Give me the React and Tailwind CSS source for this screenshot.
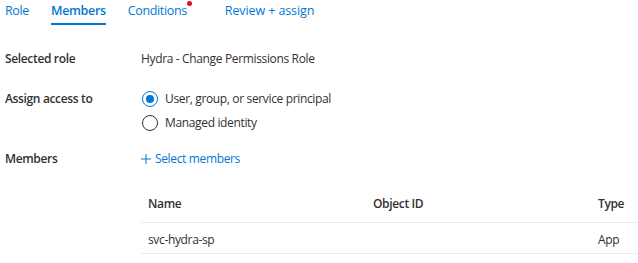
import React from "react";

export default function App() {
  return (
    <div className="w-[638px] h-[263px] bg-white overflow-hidden text-[12px] tracking-[-0.35px] text-[#323130] font-['Open_Sans','Noto_Sans',sans-serif]">
      {/* Tabs */}
      <div className="flex h-[26px] items-start pl-[5px] text-[12.5px]">
        <div className="h-[26px] pt-[2px] text-[#0078d4]">Role</div>
        <div className="relative ml-[22px] h-[26px] pt-[2px] font-semibold text-[#0078d4]">
          Members
          <div className="absolute left-0 right-0 top-[23px] h-[2px] bg-[#0078d4]" />
        </div>
        <div className="relative ml-[22px] h-[26px] pt-[2px] text-[#0078d4]">
          Conditions
          <span className="absolute right-[-5px] top-[1px] w-[5px] h-[5px] rounded-full bg-[#e00b1c]" />
        </div>
        <div className="ml-[38px] h-[26px] pt-[2px] tracking-[-0.1px] text-[#0078d4]">Review + assign</div>
      </div>

      {/* Selected role */}
      <div className="flex items-center h-[20px] mt-[23px] pl-[5px]">
        <div className="w-[136px] font-semibold">Selected role</div>
        <div>Hydra - Change Permissions Role</div>
      </div>

      {/* Assign access to */}
      <div className="flex pl-[5px] mt-[20px]">
        <div className="w-[136px] h-[20px] flex items-center font-semibold">Assign access to</div>
        <div className="flex flex-col gap-[4px]">
          <div className="flex items-center h-[20px]">
            <span className="w-[16px] h-[16px] ml-[1px] rounded-full border border-[#0078d4] flex items-center justify-center">
              <span className="w-[8px] h-[8px] rounded-full bg-[#0078d4]" />
            </span>
            <span className="ml-[7px]">User, group, or service principal</span>
          </div>
          <div className="flex items-center h-[20px]">
            <span className="w-[16px] h-[16px] ml-[1px] rounded-full border border-[#323130]" />
            <span className="ml-[7px]">Managed identity</span>
          </div>
        </div>
      </div>

      {/* Members */}
      <div className="flex items-center h-[20px] mt-[16px] pl-[5px]">
        <div className="w-[136px] font-semibold">Members</div>
        <div className="flex items-center text-[#0078d4]">
          <svg width="10" height="10" viewBox="0 0 10 10" className="mr-[4px]">
            <path d="M5 0v10M0 5h10" stroke="#0078d4" strokeWidth="1" />
          </svg>
          Select members
        </div>
      </div>

      {/* Table */}
      <div className="ml-[141px] mt-[20px]">
        <div className="flex h-[34px] items-center pb-[3px] border-b border-[#edebe9] font-semibold">
          <div className="w-[225px] pl-[7px]">Name</div>
          <div className="w-[225px] pl-[7px]">Object ID</div>
          <div className="pl-[7px]">Type</div>
        </div>
        <div className="flex h-[31px] items-center pt-[3px] border-b border-[#edebe9]">
          <div className="w-[225px] pl-[7px]">svc-hydra-sp</div>
          <div className="w-[225px] pl-[7px]"></div>
          <div className="pl-[7px]">App</div>
        </div>
      </div>
    </div>
  );
}
